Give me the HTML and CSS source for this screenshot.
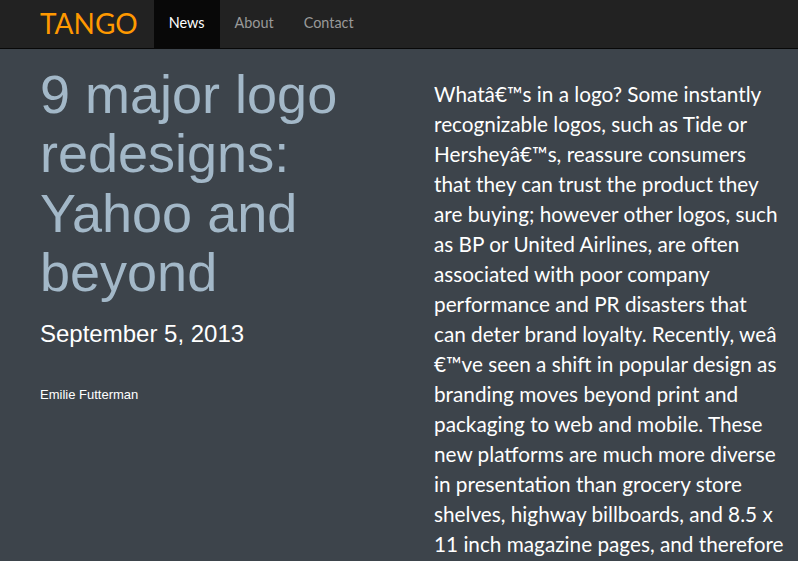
FILE: index.html
```html
<!DOCTYPE html>
<html>
<head>
<meta charset="utf-8">
<link rel="stylesheet" href="styles.css">
</head>
<body>
<nav class="navbar">
  <a class="brand" href="#">TANGO</a>
  <ul class="nav">
    <li class="active"><a href="#">News</a></li>
    <li><a href="#">About</a></li>
    <li><a href="#">Contact</a></li>
  </ul>
</nav>
<main class="article">
  <section class="meta">
    <h1 class="title">9 major logo redesigns: Yahoo and beyond</h1>
    <p class="date">September 5, 2013</p>
    <p class="author">Emilie Futterman</p>
  </section>
  <section class="body">
    <p>Whatâ€™s in a logo? Some instantly recognizable logos, such as Tide or Hersheyâ€™s, reassure consumers that they can trust the product they are buying; however other logos, such as BP or United Airlines, are often associated with poor company performance and PR disasters that can deter brand loyalty. Recently, weâ<wbr>€™ve seen a shift in popular design as branding moves beyond print and packaging to web and mobile. These new platforms are much more diverse in presentation than grocery store shelves, highway billboards, and 8.5 x 11 inch magazine pages, and therefore require logos that can adapt.</p>
  </section>
</main>
</body>
</html>
```
FILE: styles.css
```css
html, body {
  margin: 0;
  padding: 0;
}
body {
  background: #3d444b;
  font-family: "Liberation Sans", Arial, sans-serif;
  overflow: hidden;
}
.navbar {
  display: flex;
  align-items: stretch;
  height: 48px;
  background: #222222;
  border-bottom: 1px solid #080808;
  padding-left: 40px;
}
.brand {
  font-family: Lato, sans-serif;
  font-size: 28px;
  color: #ff9900;
  text-decoration: none;
  line-height: 46px;
  padding-right: 16px;
}
.nav {
  display: flex;
  list-style: none;
  margin: 0;
  padding: 0;
}
.nav li a {
  display: block;
  padding: 0 15px;
  line-height: 46px;
  font-family: Lato, sans-serif;
  font-size: 14.4px;
  color: #999999;
  text-decoration: none;
}
.nav li.active a {
  background: #080808;
  color: #ffffff;
  height: 48px;
}
.article {
  display: flex;
  padding-left: 40px;
}
.meta {
  width: 394px;
  flex: none;
}
.title {
  margin: 16px 0 0;
  max-width: 340px;
  font-size: 54px;
  line-height: 1.1;
  font-weight: normal;
  color: #a3b8c8;
}
.date {
  margin: 18px 0 0;
  font-size: 24px;
  line-height: 1.1;
  color: #ffffff;
}
.author {
  margin: 39px 0 0;
  font-size: 13px;
  line-height: 18.6px;
  color: #ffffff;
}
.body {
  width: 349.6px;
  flex: none;
}
.body p {
  margin: 30px 0 0;
  font-family: Lato, sans-serif;
  font-size: 20.75px;
  line-height: 30px;
  color: #ffffff;
}
```
